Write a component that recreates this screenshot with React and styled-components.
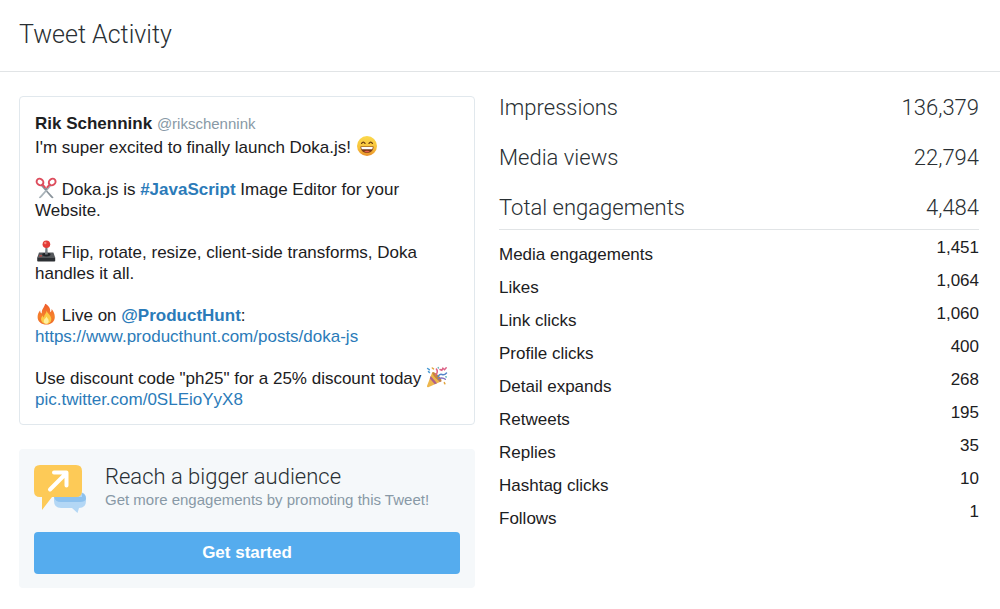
import React from "react";
import styled, { createGlobalStyle } from "styled-components";

const GlobalStyle = createGlobalStyle`
  * {
    box-sizing: border-box;
  }

  body {
    margin: 0;
    background: #ffffff;
    color: #1c2022;
    font-family: "Liberation Sans", Arial, sans-serif;
    font-size: 17px;
    line-height: 21px;
  }
`;

const light = `
  color: #292f33;
  font-family: Roboto, "Liberation Sans", sans-serif;
  font-weight: 300;
`;

const Header = styled.header`
  padding: 18px 19px 20px;
  border-bottom: 1px solid #e1e4e6;
`;

const Title = styled.h1`
  ${light}
  margin: 0;
  font-size: 25px;
  line-height: 33px;
`;

const Main = styled.main`
  display: grid;
  grid-template-columns: 456fr 480fr;
  gap: 24px;
  align-items: start;
  padding: 24px 21px 20px 19px;
`;

const Column = styled.div`
  display: flex;
  flex-direction: column;
  gap: 24px;
  min-width: 0;
`;

const Tweet = styled.article`
  padding: 16px 15px 14px;
  border: 1px solid #e1e8ed;
  border-radius: 4px;
`;

const Author = styled.div`
  padding-bottom: 3px;
`;

const Handle = styled.span`
  color: #8899a6;
  font-size: 15px;
`;

const Paragraph = styled.p`
  margin: 0 0 21px;

  &:last-child {
    margin-bottom: 0;
  }
`;

const Link = styled.a`
  color: #2b7bb9;
  font-weight: ${({ $strong }) => ($strong ? "bold" : "normal")};
  text-decoration: none;
`;

const Emoji = styled.svg`
  width: 22px;
  height: 22px;
  margin: -4px 0;
  vertical-align: 0;
`;

const Promo = styled.section`
  padding: 15px 15px 14px;
  border-radius: 4px;
  background: #f5f8fa;
`;

const PromoHead = styled.div`
  display: flex;
  gap: 18px;
  margin-bottom: 18px;
`;

const PromoIcon = styled.svg`
  flex: none;
  width: 53px;
  height: 50px;
`;

const PromoTitle = styled.h2`
  ${light}
  margin: 0;
  font-size: 22px;
  line-height: 25px;
`;

const PromoText = styled.p`
  margin: 0;
  color: #8899a6;
  font-size: 15px;
`;

const Button = styled.button`
  display: block;
  width: 100%;
  padding: 10px;
  border: 0;
  border-radius: 4px;
  background: #55acee;
  color: #ffffff;
  font: inherit;
  font-weight: bold;
  line-height: 22px;
  cursor: pointer;
`;

const Table = styled.table`
  width: 100%;
  border-collapse: collapse;

  th,
  td {
    padding: 0;
    vertical-align: top;
    font-weight: inherit;
  }

  th {
    text-align: left;
  }

  td {
    text-align: right;
  }
`;

const Totals = styled.tbody`
  ${light}
  font-size: 22px;
  line-height: 24px;

  th,
  td {
    padding-bottom: 26px;
  }

  tr:last-child th,
  tr:last-child td {
    padding-bottom: 9px;
    border-bottom: 1px solid #e1e4e6;
  }
`;

const Details = styled.tbody`
  th {
    padding-top: 12px;
  }

  td {
    padding: 5px 0 7px;
  }

  tr:first-child th {
    padding-top: 14px;
  }

  tr:first-child td {
    padding-top: 7px;
  }
`;

const totals = [
  ["Impressions", "136,379"],
  ["Media views", "22,794"],
  ["Total engagements", "4,484"]
];

const details = [
  ["Media engagements", "1,451"],
  ["Likes", "1,064"],
  ["Link clicks", "1,060"],
  ["Profile clicks", "400"],
  ["Detail expands", "268"],
  ["Retweets", "195"],
  ["Replies", "35"],
  ["Hashtag clicks", "10"],
  ["Follows", "1"]
];

const Grin = () => (
  <Emoji viewBox="0 0 22 22" aria-hidden="true">
    <defs>
      <linearGradient id="grin" x1="0" y1="0" x2="0" y2="1">
        <stop offset="0" stopColor="#fbd94c" />
        <stop offset="0.6" stopColor="#f8c23a" />
        <stop offset="1" stopColor="#e98f2b" />
      </linearGradient>
    </defs>
    <circle cx="11" cy="11" r="10" fill="url(#grin)" />
    <g fill="none" stroke="#6b3d10" strokeWidth="1.3" strokeLinecap="round">
      <path d="M5.6 8.4q1.7-2.6 3.4 0" />
      <path d="M13 8.4q1.7-2.6 3.4 0" />
    </g>
    <path d="M4.5 11.5h13c0 4-2.8 6.4-6.5 6.4s-6.5-2.4-6.5-6.4z" fill="#7a3a17" />
    <path d="M5.2 12h11.6l-.5 2.3H5.7z" fill="#ffffff" />
    <path d="M8 16.6q3-1.6 6 0-3 1.6-6 0z" fill="#e5604d" />
  </Emoji>
);

const Scissors = () => (
  <Emoji viewBox="0 0 22 22" aria-hidden="true">
    <path d="M6.6 7.6 18.6 20.4l-1 .8c-1.4-.4-2-1.3-2.8-2.3L5.6 8.6z" fill="#8b959c" />
    <path d="M15.6 7.6 3.8 20.4l1 .8c1.4-.4 2-1.3 2.8-2.3l9-10.3z" fill="#a9b3b9" />
    <g fill="none" stroke="#dd4c5c" strokeWidth="1.9">
      <ellipse cx="5" cy="5" rx="3.6" ry="3" transform="rotate(35 5 5)" />
      <ellipse cx="17.2" cy="5" rx="3.6" ry="3" transform="rotate(-35 17.2 5)" />
      <path d="M7.4 7.4 10 10.4M14.8 7.4l-2.6 3" strokeLinecap="round" />
    </g>
    <circle cx="11.1" cy="11.8" r=".9" fill="#65727a" />
  </Emoji>
);

const Joystick = () => (
  <Emoji viewBox="0 0 22 22" aria-hidden="true">
    <path d="M4 12.5h14.4l1.8 5.2H2.2z" fill="#55585c" />
    <path d="M2.2 17.5h18v3.3q0 .8-.8.8H3q-.8 0-.8-.8z" fill="#2c2f33" />
    <ellipse cx="11.4" cy="14.6" rx="4.2" ry="1.8" fill="#202327" />
    <path d="M10.5 6h1.8l.5 8.6h-2.8z" fill="#777c81" />
    <path d="M4.4 15.2h2.6v1.4H4z" fill="#c94b42" />
    <circle cx="11.4" cy="4.2" r="3.8" fill="#e33b37" />
    <circle cx="10.3" cy="3" r="1.2" fill="#f58b80" />
  </Emoji>
);

const Fire = () => (
  <Emoji viewBox="0 0 22 22" aria-hidden="true">
    <defs>
      <linearGradient id="fire" x1="0" y1="0" x2="0" y2="1">
        <stop offset="0" stopColor="#ef5b2c" />
        <stop offset="0.6" stopColor="#f5812b" />
        <stop offset="1" stopColor="#ee6a2b" />
      </linearGradient>
    </defs>
    <path
      d="M10.2.8c4 2 5.4 5 5 8.4 1.1-.6 1.5-1.8 1.4-3.3 2 2.3 3.2 5 3.2 8 0 4.4-3.4 7.6-8.3 7.6-5 0-8.9-3-8.9-7.6 0-2.7 1.1-4.7 2.6-6.7 0 1.8.5 2.8 1.6 3.4C6.3 6.7 9 5 10.2.8z"
      fill="url(#fire)"
    />
    <path
      d="M11.7 7.5c.4 2.8 3.8 4.2 4.5 7.7.6 3.2-1.5 5.8-4.9 5.8-3.5 0-5.5-2.4-5.2-5.4.2-1.4.9-2.4 1.6-3.2.1 1 .5 1.7 1.2 2 .3-3 2.5-3.8 2.8-6.9z"
      fill="#fcca45"
    />
    <path d="M11.5 13.5c.3 1.7 2.2 2.3 2.2 4.4 0 1.7-1.1 2.8-2.5 2.8s-2.6-1-2.5-2.6c.1-2 2.3-2.4 2.8-4.6z" fill="#fff0a0" />
  </Emoji>
);

const Party = () => (
  <Emoji viewBox="0 0 22 22" aria-hidden="true">
    <path d="M6.2 6.2Q12.7 8.7 15.6 15.2L2.3 21.3Q.7 21.5 1 20z" fill="#edb64c" />
    <path d="m4.7 10.1 6.3 7.2-2.2 1-5-5.8zM6.4 7.3l7.4 8.7 1.5-.8-5.8-7z" fill="#ad608b" />
    <ellipse cx="10.9" cy="10.7" rx="1.9" ry="6.2" transform="rotate(-45 10.9 10.7)" fill="#c6863d" />
    <g fill="none" strokeWidth="1.5" strokeLinecap="round">
      <path d="M9.6 8.8q3-2.6.8-5.8" stroke="#dd6387" />
      <path d="M12 10.7q1.7-3.2 4-2.2t4.5-1.5" stroke="#5585ca" />
      <path d="M12.5 12.8q4-2 6.8.5" stroke="#8371bd" />
      <path d="m1.6 2.5 1.7 1.2M2.5 5.6l1 .9" stroke="#4d9bd3" />
      <path d="m14 3.5 1.8.8 1.1-2 1.6 1.4 1.7-2" stroke="#dd6387" />
      <path d="m6.3 2 1.2.9M18.3 16.6l.6 1.2" stroke="#e3a540" />
      <path d="m12.2 1.6.2.4M19.8 10.8l.5.1" stroke="#67b3bd" />
    </g>
  </Emoji>
);

const PromoteIcon = () => (
  <PromoIcon viewBox="0 0 53 50" aria-hidden="true">
    <path
      d="M27 28h18q7 0 7 7v2q0 7-7 7l-1.5 5L38 44H27q-7 0-7-7v-2q0-7 7-7z"
      fill="#b3d7f5"
    />
    <path d="M20 33h28V29q4 1 4 6-1 3-6 3H27q-6 0-7-5z" fill="#8ec2ee" />
    <path
      d="M6 1h36q6 0 6 6v20q0 6-6 6H18L8 46V33H6q-6 0-6-6V7q0-6 6-6z"
      fill="#fdca57"
    />
    <path
      d="M16 25.5 32 9.5M20 8.500H32.5V21.5"
      fill="none"
      stroke="#ffffff"
      strokeWidth="4"
      strokeLinejoin="round"
      strokeLinecap="round"
    />
  </PromoIcon>
);

const Rows = ({ items }) =>
  items.map(([label, value]) => (
    <tr key={label}>
      <th scope="row">{label}</th>
      <td>{value}</td>
    </tr>
  ));

const App = () => (
  <>
    <GlobalStyle />
    <Header>
      <Title>Tweet Activity</Title>
    </Header>
    <Main>
      <Column>
        <Tweet>
          <Author>
            <strong>Rik Schennink</strong> <Handle>@rikschennink</Handle>
          </Author>
          <Paragraph>
            I'm super excited to finally launch Doka.js! <Grin />
          </Paragraph>
          <Paragraph>
            <Scissors /> Doka.js is{" "}
            <Link href="#javascript" $strong>
              #JavaScript
            </Link>{" "}
            Image Editor for your Website.
          </Paragraph>
          <Paragraph>
            <Joystick /> Flip, rotate, resize, client-side transforms, Doka
            handles it all.
          </Paragraph>
          <Paragraph>
            <Fire /> Live on{" "}
            <Link href="#producthunt" $strong>
              @ProductHunt
            </Link>
            :<br />
            <Link href="https://www.producthunt.com/posts/doka-js">
              https://www.producthunt.com/posts/doka-js
            </Link>
          </Paragraph>
          <Paragraph>
            Use discount code "ph25" for a 25% discount today <Party />
            <br />
            <Link href="https://pic.twitter.com/0SLEioYyX8">
              pic.twitter.com/0SLEioYyX8
            </Link>
          </Paragraph>
        </Tweet>
        <Promo>
          <PromoHead>
            <PromoteIcon />
            <div>
              <PromoTitle>Reach a bigger audience</PromoTitle>
              <PromoText>
                Get more engagements by promoting this Tweet!
              </PromoText>
            </div>
          </PromoHead>
          <Button type="button">Get started</Button>
        </Promo>
      </Column>
      <Table>
        <Totals>
          <Rows items={totals} />
        </Totals>
        <Details>
          <Rows items={details} />
        </Details>
      </Table>
    </Main>
  </>
);

export default App;
